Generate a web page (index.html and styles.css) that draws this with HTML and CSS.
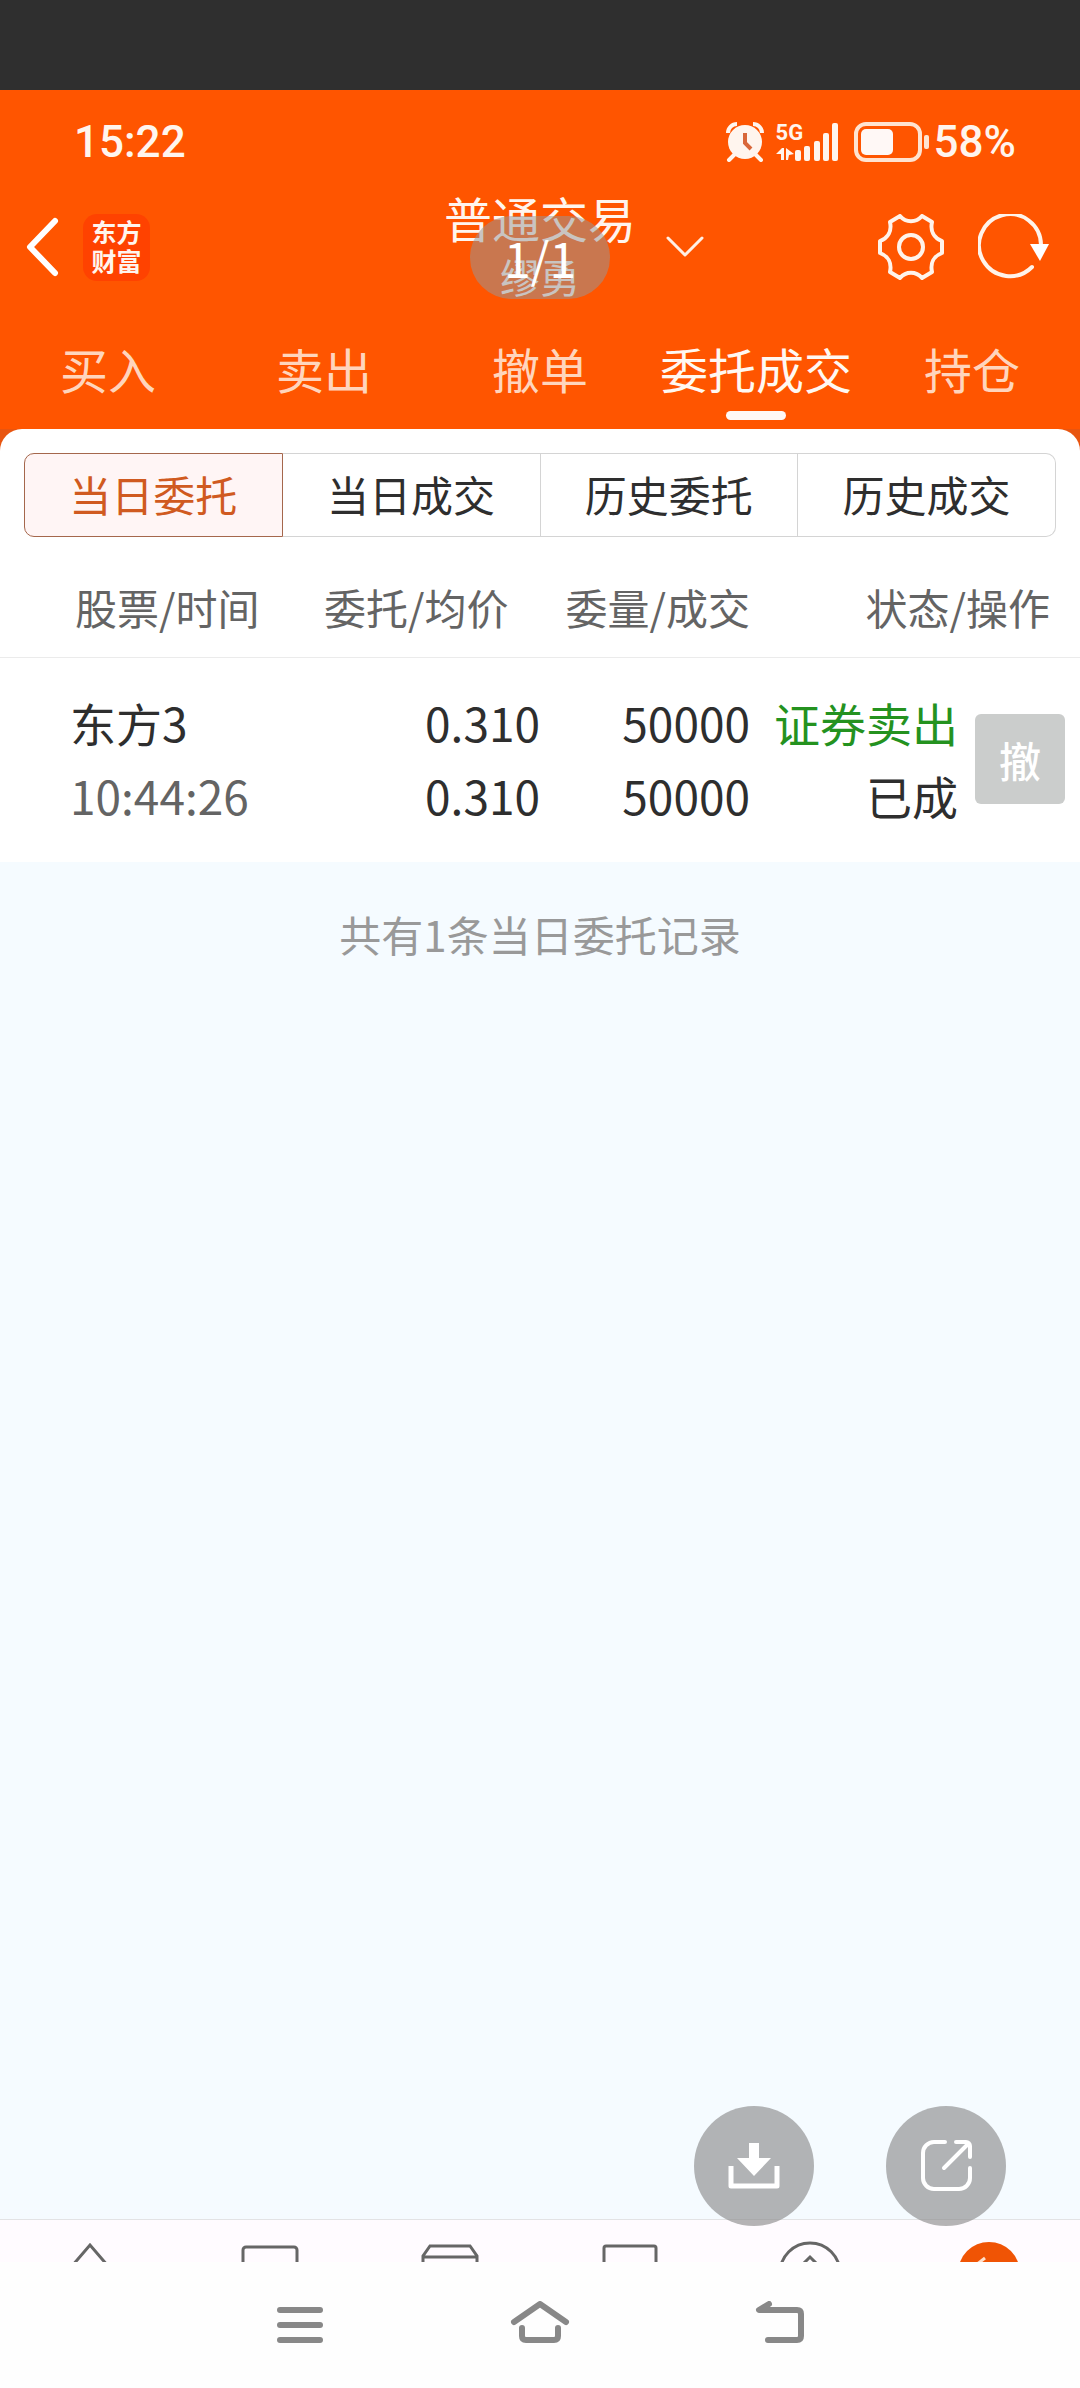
FILE: index.html
```html
<!DOCTYPE html>
<html lang="zh-CN">
<head>
    <meta charset="UTF-8">
    <meta name="viewport" content="width=device-width, initial-scale=1.0">
    <title>普通交易</title>
    <link rel="stylesheet" href="styles.css">
</head>
<body>
    <div class="top-strip"></div>
    <header class="header">
        <div class="status-bar">
            <span class="clock">15:22</span>
            <div class="status-icons">
                <svg class="alarm" width="38" height="40" viewBox="0 0 38 40">
                    <path d="M2 11a9 9 0 0 1 9-9M36 11a9 9 0 0 0-9-9" stroke="#fff5ee" stroke-width="4" fill="none"/>
                    <path d="M8 33l-5 5M30 33l5 5" stroke="#fff5ee" stroke-width="4" stroke-linecap="round"/>
                    <circle cx="19" cy="20" r="17" fill="#fff5ee"/>
                    <path d="M19 11v10l6 6" stroke="#d9673a" stroke-width="4" fill="none"/>
                </svg>
                <div class="signal">
                    <span class="network">5G</span>
                    <svg width="62" height="40" viewBox="0 0 62 40" fill="#fff5ee">
                        <path d="M0 32l6-6h2v12H5v-6zM10 26l8 6-5 1-1 5h-2z"/>
                        <rect x="19" y="28" width="6" height="11" rx="2"/>
                        <rect x="28" y="24" width="6" height="15" rx="2"/>
                        <rect x="38" y="19" width="6" height="20" rx="2"/>
                        <rect x="47" y="11" width="6" height="28" rx="2"/>
                        <rect x="56" y="1" width="6" height="38" rx="2"/>
                    </svg>
                </div>
                <svg class="battery" width="76" height="40" viewBox="0 0 76 40">
                    <rect x="2" y="2" width="64" height="36" rx="10" fill="none" stroke="#ffe3d0" stroke-width="4"/>
                    <rect x="7" y="7" width="32" height="26" rx="5" fill="#fff8f6"/>
                    <rect x="70" y="13" width="5" height="14" rx="2" fill="#ffe3d0"/>
                </svg>
                <span class="percent">58%</span>
            </div>
        </div>

        <div class="title-bar">
            <div class="title-left">
                <button class="icon-btn" aria-label="返回">
                    <svg width="36" height="60" viewBox="0 0 36 60" fill="none" stroke="#fff" stroke-width="6" stroke-linecap="round" stroke-linejoin="round">
                        <path d="M30 4L5 30l25 26"/>
                    </svg>
                </button>
                <div class="logo"><span>东方</span><span>财富</span></div>
            </div>
            <div class="title">
                <h1>普通交易</h1>
                <p>缪勇</p>
                <span class="page-pill">1/1</span>
            </div>
            <div class="title-right">
                <button class="icon-btn switch" aria-label="切换账户">
                    <svg width="38" height="22" viewBox="0 0 38 22" fill="none" stroke="#fff0e6" stroke-width="3" stroke-linecap="round" stroke-linejoin="round">
                        <path d="M2 2l17 17L36 2"/>
                    </svg>
                </button>
                <button class="icon-btn" aria-label="设置">
                    <svg width="66" height="66" viewBox="0 0 66 66" fill="none" stroke="#fff3ea" stroke-width="4" stroke-linejoin="round">
                        <path d="M22 2C28 9 38 9 44 2L54 8C52 17 56 24 64 27L64 39C56 42 52 49 54 58L44 64C38 57 28 57 22 64L12 58C14 49 10 42 2 39L2 27C10 24 14 17 12 8Z"/>
                        <circle cx="33" cy="33" r="12"/>
                    </svg>
                </button>
                <button class="icon-btn" aria-label="刷新">
                    <svg width="72" height="66" viewBox="0 0 72 66" fill="none" stroke="#fff3ea" stroke-width="4" stroke-linecap="round">
                        <path d="M63 31A31 31 0 1 0 54 53"/>
                        <path d="M52 30h19l-9 17z" fill="#fff" stroke="none"/>
                    </svg>
                </button>
            </div>
        </div>

        <nav class="tabs">
            <a class="tab" href="#">买入</a>
            <a class="tab" href="#">卖出</a>
            <a class="tab" href="#">撤单</a>
            <a class="tab active" href="#">委托成交</a>
            <a class="tab" href="#">持仓</a>
        </nav>
    </header>

    <main class="content">
        <section class="sheet">
            <div class="segments">
                <button class="segment active">当日委托</button>
                <button class="segment">当日成交</button>
                <button class="segment">历史委托</button>
                <button class="segment">历史成交</button>
            </div>
            <table class="orders">
                <colgroup>
                    <col class="col-name">
                    <col class="col-price">
                    <col class="col-amount">
                    <col class="col-state">
                    <col class="col-action">
                </colgroup>
                <thead>
                    <tr>
                        <th class="name">股票/时间</th>
                        <th class="price">委托/均价</th>
                        <th>委量/成交</th>
                        <th class="state" colspan="2">状态/操作</th>
                    </tr>
                </thead>
                <tbody>
                    <tr>
                        <td class="name"><div>东方3</div><div class="time">10:44:26</div></td>
                        <td><div>0.310</div><div>0.310</div></td>
                        <td><div>50000</div><div>50000</div></td>
                        <td><div class="sell">证券卖出</div><div>已成</div></td>
                        <td class="action"><button class="cancel">撤</button></td>
                    </tr>
                </tbody>
            </table>
        </section>
        <p class="summary">共有1条当日委托记录</p>
    </main>

    <footer class="footer">
        <div class="floating">
            <button class="round-btn" aria-label="下载">
                <svg width="52" height="52" viewBox="0 0 52 52" fill="#fff">
                    <path d="M21 3h10v15h12L26 36 9 18h12z"/>
                    <path d="M3 26v20h46V26" fill="none" stroke="#fff" stroke-width="5" stroke-linejoin="round"/>
                </svg>
            </button>
            <button class="round-btn" aria-label="分享">
                <svg width="52" height="52" viewBox="0 0 52 52" fill="none" stroke="#fff" stroke-width="4" stroke-linecap="round" stroke-linejoin="round">
                    <path d="M25 2H14A11 11 0 0 0 3 13v25a11 11 0 0 0 11 11h25a11 11 0 0 0 11-11V28"/>
                    <path d="M36 2h10a4 4 0 0 1 4 4v11M48 4L24 28"/>
                </svg>
            </button>
        </div>
        <nav class="bottom-nav">
            <a href="#" aria-label="首页">
                <svg width="64" height="64" viewBox="0 0 64 64"><path d="M8 32L32 4l24 28M14 26v34h36V26"/></svg>
            </a>
            <a href="#" aria-label="自选">
                <svg width="64" height="64" viewBox="0 0 64 64"><rect x="5" y="6" width="54" height="44" rx="3"/></svg>
            </a>
            <a href="#" aria-label="行情">
                <svg width="64" height="64" viewBox="0 0 64 64"><path d="M5 60V15l7-10h40l7 10v45zM5 16h54"/></svg>
            </a>
            <a href="#" aria-label="资讯">
                <svg width="64" height="64" viewBox="0 0 64 64"><rect x="6" y="5" width="52" height="44" rx="2"/></svg>
            </a>
            <a href="#" aria-label="发现">
                <svg width="64" height="64" viewBox="0 0 64 64"><circle cx="32" cy="32" r="30"/><path d="M22 26l10-10 10 10"/></svg>
            </a>
            <a href="#" aria-label="交易">
                <svg width="64" height="64" viewBox="0 0 64 64"><circle class="trade-dot" cx="31" cy="32" r="31"/><path class="trade-line" d="M18 24l9-7"/></svg>
            </a>
        </nav>
        <div class="system-bar">
            <button class="icon-btn" aria-label="菜单">
                <svg width="60" height="48" viewBox="0 0 60 48" fill="#888">
                    <rect x="7" y="6" width="46" height="6" rx="3"/>
                    <rect x="7" y="21" width="46" height="6" rx="3"/>
                    <rect x="7" y="36" width="46" height="6" rx="3"/>
                </svg>
            </button>
            <button class="icon-btn" aria-label="主页">
                <svg width="60" height="48" viewBox="0 0 60 48" fill="none" stroke="#888" stroke-width="6" stroke-linecap="round" stroke-linejoin="round">
                    <path d="M4 21L30 3l26 18"/>
                    <path d="M12 27v8q0 4 4 4h28q4 0 4-4v-8"/>
                </svg>
            </button>
            <button class="icon-btn" aria-label="返回上一级">
                <svg width="60" height="48" viewBox="0 0 60 48" fill="none" stroke="#888" stroke-width="6" stroke-linecap="round" stroke-linejoin="round">
                    <path d="M19 3L9 9h38q4 0 4 4v22q0 4-4 4H18"/>
                </svg>
            </button>
        </div>
    </footer>
</body>
</html>
```
FILE: styles.css
```css
* {
    box-sizing: border-box;
}
body {
    margin: 0;
    min-height: 100vh;
    display: flex;
    flex-direction: column;
    font-family: "Noto Sans CJK SC", sans-serif;
    background-color: #f5fbff;
    color: #2e2e2e;
}
h1, p {
    margin: 0;
    font-weight: normal;
}
button {
    font-family: inherit;
    padding: 0;
    border: none;
    background: none;
    color: inherit;
}
a {
    text-decoration: none;
    color: inherit;
}
svg {
    display: block;
}
.icon-btn {
    display: flex;
}
.top-strip {
    height: 90px;
    background-color: #2f2f2f;
}

/* header */
.header {
    background-color: #ff5500;
    color: #fff5ee;
}
.status-bar {
    display: flex;
    justify-content: space-between;
    align-items: center;
    height: 98px;
    padding: 6px 64px 0 74px;
    font-family: Roboto, "Noto Sans CJK SC", sans-serif;
    font-size: 44px;
    font-weight: 500;
}
.status-icons {
    display: flex;
    align-items: center;
}
.signal {
    position: relative;
    margin: 0 16px 0 12px;
}
.network {
    position: absolute;
    left: 0;
    top: 0;
    font-size: 22px;
    line-height: 22px;
    font-weight: 700;
}
.percent {
    margin-left: 4px;
}
.title-bar {
    display: grid;
    grid-template-columns: 1fr auto 1fr;
    align-items: center;
}
.title-left {
    display: flex;
    align-items: center;
    gap: 22px;
    padding-left: 25px;
}
.logo {
    display: flex;
    flex-direction: column;
    align-items: center;
    justify-content: center;
    width: 67px;
    height: 67px;
    border-radius: 14px;
    background-color: #ff4200;
    font-size: 25px;
    line-height: 29px;
    font-weight: 700;
    padding-bottom: 3px;
}
.title {
    position: relative;
    text-align: center;
}
.title h1 {
    font-size: 48px;
    line-height: 58px;
}
.title p {
    font-size: 40px;
    line-height: 60px;
}
.page-pill {
    position: absolute;
    left: 50%;
    top: 28px;
    width: 140px;
    margin-left: -70px;
    border-radius: 42px;
    background-color: rgba(152, 152, 152, 0.52);
    color: #fff;
    font-size: 48px;
    line-height: 83px;
}
.title-right {
    display: flex;
    align-items: center;
    gap: 34px;
    padding-right: 30px;
}
.switch {
    margin: 0 auto 0 30px;
}
.tabs {
    display: flex;
    padding: 32px 0 9px;
}
.tab {
    flex: 1;
    display: flex;
    flex-direction: column;
    align-items: center;
    gap: 13px;
    font-size: 48px;
    line-height: 60px;
    color: #ffd5bd;
}
.tab::after {
    content: "";
    width: 60px;
    height: 9px;
    border-radius: 5px;
}
.tab.active {
    color: #fff8f2;
}
.tab.active::after {
    background-color: #fff8f6;
}

/* orders */
.content {
    flex: 1;
    background: linear-gradient(#e85510 24px, #f5fbff 24px);
}
.sheet {
    background-color: #fff;
    border-radius: 22px 22px 0 0;
    padding-top: 24px;
}
.segments {
    display: flex;
    margin: 0 24px 24px;
}
.segment {
    flex: 1;
    height: 84px;
    border: 1px solid #d4d4d4;
    border-left-width: 0;
    font-size: 42px;
    line-height: 60px;
    padding-bottom: 2px;
}
.segment:first-child {
    border-left-width: 1px;
    border-radius: 10px 0 0 10px;
}
.segment:last-child {
    border-radius: 0 10px 10px 0;
}
.segment.active {
    border-color: #a5674c;
    background-color: #fff5f5;
    color: #d05a20;
}
.orders {
    width: 100%;
    table-layout: fixed;
    border-collapse: collapse;
    text-align: right;
}
.col-name {
    width: 30%;
}
.col-price {
    width: 20%;
}
.col-state {
    width: 208px;
}
.col-action {
    width: 122px;
}
.orders th {
    padding: 16px 0 20px;
    border-bottom: 1px solid #ebebeb;
    font-size: 42px;
    line-height: 60px;
    font-weight: normal;
    white-space: nowrap;
    color: #646464;
}
.orders td {
    padding: 28px 0 30px;
    font-size: 46px;
    line-height: 73px;
}
.orders .name {
    text-align: left;
    padding-left: 70px;
}
.orders th.name {
    padding-left: 75px;
}
.orders th.price {
    padding-right: 32px;
}
.orders th.state {
    padding-right: 30px;
}
.orders .time {
    color: #646464;
}
.orders .sell {
    color: #24921f;
}
.orders .action {
    padding-right: 15px;
}
.cancel {
    display: block;
    margin-left: auto;
    width: 90px;
    height: 90px;
    border-radius: 6px;
    background-color: #cbcdcc;
    color: #fff;
    font-size: 42px;
    font-weight: 500;
}
.summary {
    padding: 42px 0;
    text-align: center;
    font-size: 42px;
    line-height: 60px;
    color: #999;
}

/* bottom */
.footer {
    position: relative;
}
.floating {
    position: absolute;
    top: -113px;
    right: 74px;
    display: flex;
    gap: 72px;
}
.round-btn {
    display: flex;
    align-items: center;
    justify-content: center;
    width: 120px;
    height: 120px;
    border-radius: 50%;
    background-color: rgba(132, 132, 132, 0.6);
}
.bottom-nav {
    display: flex;
    height: 43px;
    overflow: hidden;
    border-top: 1px solid #e3e3e5;
    background-color: #fffbff;
}
.bottom-nav a {
    flex: 1;
    display: flex;
    justify-content: center;
    padding-top: 21px;
}
.bottom-nav svg {
    flex-shrink: 0;
    fill: none;
    stroke: #666;
    stroke-width: 3;
}
.bottom-nav .trade-dot {
    fill: #f05405;
    stroke: none;
}
.bottom-nav .trade-line {
    stroke: #ffe0cc;
}
.system-bar {
    display: flex;
    justify-content: center;
    align-items: center;
    gap: 180px;
    height: 126px;
    background-color: #fefefe;
}
```
